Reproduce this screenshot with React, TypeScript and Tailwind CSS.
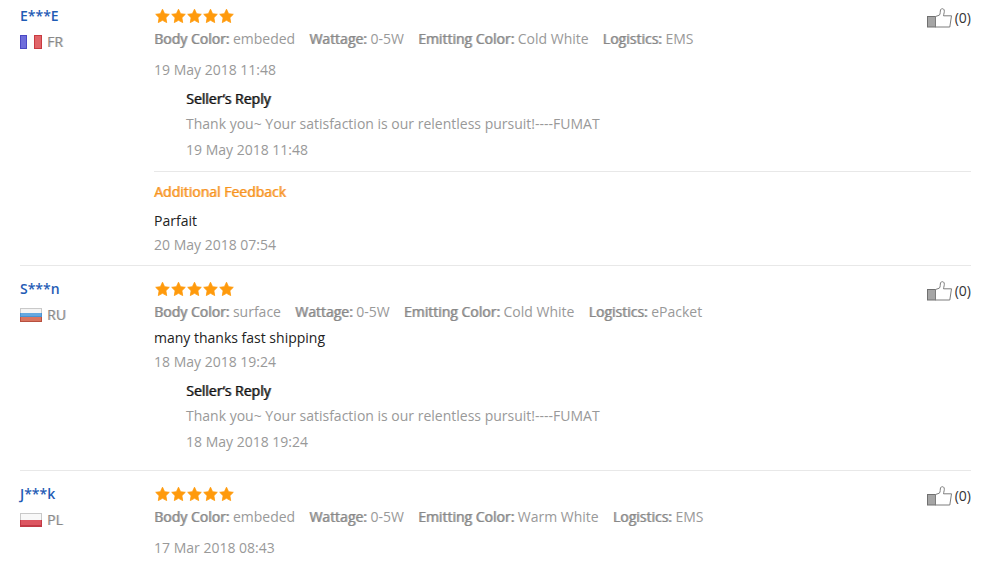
type Reply = { text: string; date: string };

type Review = {
  user: string;
  country: "FR" | "RU" | "PL";
  specs: [string, string][];
  text?: string;
  date: string;
  reply?: Reply;
  additional?: Reply;
};

const thanks = "Thank you~ Your satisfaction is our relentless pursuit!----FUMAT";

const reviews: Review[] = [
  {
    user: "E***E",
    country: "FR",
    specs: [
      ["Body Color:", "embeded"],
      ["Wattage:", "0-5W"],
      ["Emitting Color:", "Cold White"],
      ["Logistics:", "EMS"],
    ],
    date: "19 May 2018 11:48",
    reply: { text: thanks, date: "19 May 2018 11:48" },
    additional: { text: "Parfait", date: "20 May 2018 07:54" },
  },
  {
    user: "S***n",
    country: "RU",
    specs: [
      ["Body Color:", "surface"],
      ["Wattage:", "0-5W"],
      ["Emitting Color:", "Cold White"],
      ["Logistics:", "ePacket"],
    ],
    text: "many thanks fast shipping",
    date: "18 May 2018 19:24",
    reply: { text: thanks, date: "18 May 2018 19:24" },
  },
  {
    user: "J***k",
    country: "PL",
    specs: [
      ["Body Color:", "embeded"],
      ["Wattage:", "0-5W"],
      ["Emitting Color:", "Warm White"],
      ["Logistics:", "EMS"],
    ],
    date: "17 Mar 2018 08:43",
  },
];

function Flag({ country }: { country: Review["country"] }) {
  return (
    <svg width="22" height="14" viewBox="0 0 22 14" aria-hidden="true">
      {country === "FR" && (
        <>
          <rect width="22" height="14" fill="#fdfdfd" />
          <rect width="7" height="14" fill="#4a48c4" />
          <rect x="1" y="1" width="5" height="12" fill="#6e6ddb" />
          <rect x="14" width="8" height="14" fill="#c93a40" />
          <rect x="15" y="1" width="6" height="12" fill="#e06468" />
        </>
      )}
      {country === "RU" && (
        <>
          <rect width="22" height="14" fill="#c9c9c9" />
          <rect x="1" y="1" width="20" height="4" fill="#f4f4f4" />
          <rect y="5" width="22" height="4" fill="#4a92d2" />
          <rect x="1" y="5" width="20" height="3" fill="#64a8e0" />
          <rect y="9" width="22" height="5" fill="#b8503f" />
          <rect x="1" y="9" width="20" height="4" fill="#d9745f" />
        </>
      )}
      {country === "PL" && (
        <>
          <rect width="22" height="14" fill="#c9c9c9" />
          <rect x="1" y="1" width="20" height="6" fill="#f8f8f8" />
          <rect y="7" width="22" height="7" fill="#c23a46" />
          <rect x="1" y="7" width="20" height="5" fill="#dd5661" />
        </>
      )}
    </svg>
  );
}

function Stars() {
  return (
    <div role="img" aria-label="5 stars" className="flex h-[23px] items-center">
      {[0, 1, 2, 3, 4].map((i) => (
        <svg key={i} width="16" height="16" viewBox="0 0 16 16" aria-hidden="true">
          <path
            d="M8.5 1.2 10.6 5.7 15.3 6.3 11.9 9.7 12.7 14.6 8.5 12.3 4.3 14.6 5.1 9.7 1.7 6.3 6.4 5.7Z"
            fill="#ff9a0c"
            stroke="#ff9a0c"
            strokeWidth="0.8"
            strokeLinejoin="round"
          />
        </svg>
      ))}
    </div>
  );
}

function LikeButton() {
  return (
    <button type="button" aria-label="Helpful (0)" className="flex h-6 shrink-0 items-center gap-0.5 text-[#333]">
      <svg width="26" height="20" viewBox="0 0 26 20" fill="none" aria-hidden="true">
        <rect x="0.5" y="8.5" width="8" height="10.5" fill="#a5a5a5" stroke="#707070" />
        <path
          d="M8.5 8.5 12.3 7.2C13.6 6 13 3.2 13.6 1.7 14.2.3 16.6.4 17.1 1.8 17.8 3.8 16.7 5.8 16.5 7.8H24.5L22.8 19H8.5Z"
          fill="#fff"
          stroke="#7d7d7d"
          strokeLinejoin="round"
        />
      </svg>
      <span>(0)</span>
    </button>
  );
}

function ReviewItem({ review }: { review: Review }) {
  const { user, country, specs, text, date, reply, additional } = review;
  return (
    <li className="flex border-b border-[#e8e8e8] pt-[11px] first:pt-1 last:border-b-0">
      <div className="w-[134px] shrink-0">
        <a href="#" className="block font-semibold text-[#1f5cb5]">
          {user}
        </a>
        <div className="mt-0.5 flex items-center gap-[5px] text-[#888] [text-shadow:1px_0_0_#88888866]">
          <Flag country={country} />
          <span>{country}</span>
        </div>
      </div>
      <div className="min-w-0 grow">
        <div className="flex h-[23px] items-start justify-between">
          <Stars />
          <div className="pt-0.5">
            <LikeButton />
          </div>
        </div>
        <div className="flex flex-wrap gap-x-[14px] text-[#999]">
          {specs.map(([label, value]) => (
            <span key={label}>
              <strong className="font-normal text-[#888] [text-shadow:1px_0_0_#888888aa]">{label}</strong> {value}
            </span>
          ))}
        </div>
        {text ? <p className="mt-0.5 text-[#222]">{text}</p> : <div className="h-[7px]" />}
        <p className="text-[#999]">{date}</p>
        {reply && (
          <div className={additional ? "mt-[5px] pb-[9px] pl-8 text-[#999]" : "mt-[5px] pb-4 pl-8 text-[#999]"}>
            <h4 className="text-[#111] [text-shadow:1px_0_0_#111111aa]">Seller‘s Reply</h4>
            <p className="mt-px">{reply.text}</p>
            <p className="mt-0.5">{reply.date}</p>
          </div>
        )}
        {additional && (
          <div className="border-t border-[#e8e8e8] pt-2 pb-2">
            <h4 className="text-[#f7941e] [text-shadow:1px_0_0_#f7941eaa]">Additional Feedback</h4>
            <p className="mt-[5px] text-[#222]">{additional.text}</p>
            <p className="text-[#999]">{additional.date}</p>
          </div>
        )}
      </div>
    </li>
  );
}

export default function App() {
  return (
    <main className="bg-white pr-[29px] pl-5 font-['Open_Sans','Noto_Sans',sans-serif] text-[14px] leading-6">
      <ul>
        {reviews.map((review) => (
          <ReviewItem key={review.user} review={review} />
        ))}
      </ul>
    </main>
  );
}
